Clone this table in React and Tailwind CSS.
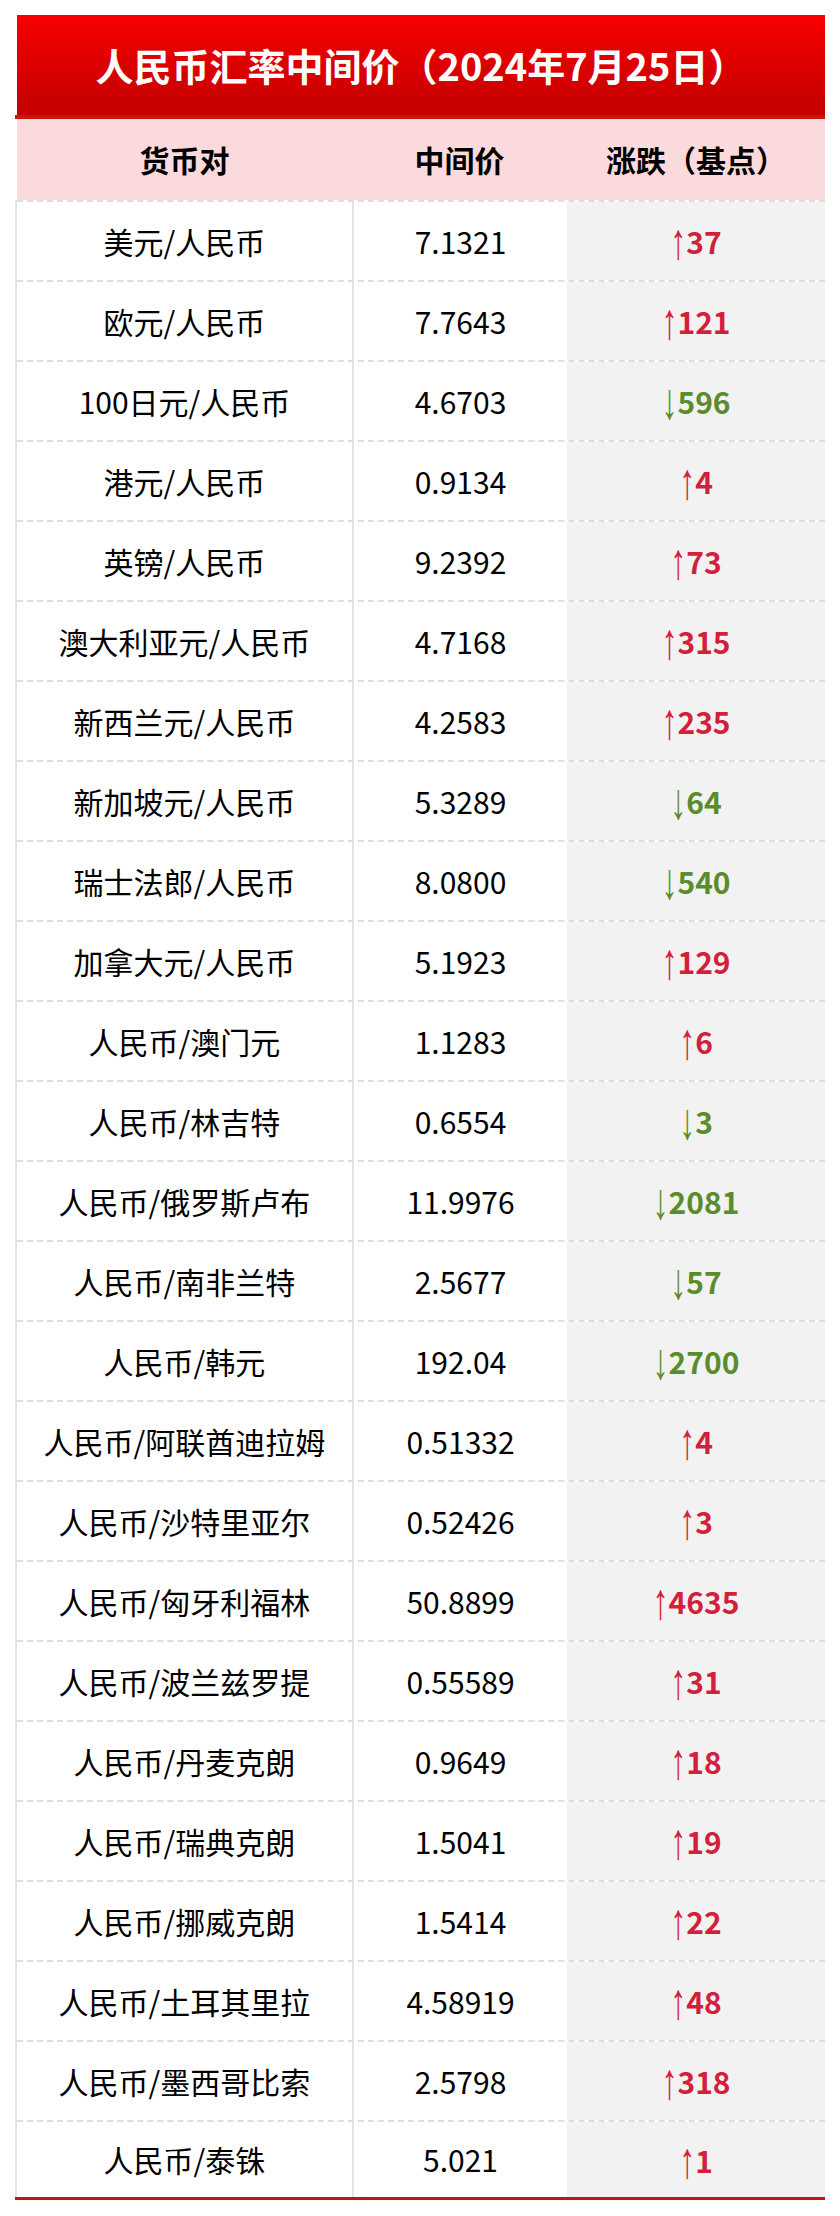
import React from 'react';

// 人民币汇率中间价 (2024-07-25)
const RATES = [
    ['美元/人民币', '7.1321', 1, '37'],
    ['欧元/人民币', '7.7643', 1, '121'],
    ['100日元/人民币', '4.6703', -1, '596'],
    ['港元/人民币', '0.9134', 1, '4'],
    ['英镑/人民币', '9.2392', 1, '73'],
    ['澳大利亚元/人民币', '4.7168', 1, '315'],
    ['新西兰元/人民币', '4.2583', 1, '235'],
    ['新加坡元/人民币', '5.3289', -1, '64'],
    ['瑞士法郎/人民币', '8.0800', -1, '540'],
    ['加拿大元/人民币', '5.1923', 1, '129'],
    ['人民币/澳门元', '1.1283', 1, '6'],
    ['人民币/林吉特', '0.6554', -1, '3'],
    ['人民币/俄罗斯卢布', '11.9976', -1, '2081'],
    ['人民币/南非兰特', '2.5677', -1, '57'],
    ['人民币/韩元', '192.04', -1, '2700'],
    ['人民币/阿联酋迪拉姆', '0.51332', 1, '4'],
    ['人民币/沙特里亚尔', '0.52426', 1, '3'],
    ['人民币/匈牙利福林', '50.8899', 1, '4635'],
    ['人民币/波兰兹罗提', '0.55589', 1, '31'],
    ['人民币/丹麦克朗', '0.9649', 1, '18'],
    ['人民币/瑞典克朗', '1.5041', 1, '19'],
    ['人民币/挪威克朗', '1.5414', 1, '22'],
    ['人民币/土耳其里拉', '4.58919', 1, '48'],
    ['人民币/墨西哥比索', '2.5798', 1, '318'],
    ['人民币/泰铢', '5.021', 1, '1'],
];

const FONT = "font-['Noto_Sans_CJK_SC','Noto_Sans',sans-serif]";

const Change = ({ dir, value }) => {
    const color = dir > 0 ? 'text-[#d21f3c]' : 'text-[#5a8c2c]';
    return (
        <span className={`flex items-center ${color}`}>
            <span className="inline-block scale-y-[1.6] font-['Liberation_Sans','DejaVu_Sans',sans-serif] text-[32px] font-normal leading-none">
                {dir > 0 ? '↑' : '↓'}
            </span>
            <span className="text-[30px] font-bold leading-none">{value}</span>
        </span>
    );
};

const App = () => {
    return (
        <div className={`min-h-[2216px] w-[840px] bg-white px-[15px] pt-[15px] ${FONT}`}>
            {/* Title */}
            <div className="ml-[2px] flex h-[100px] items-center justify-center bg-gradient-to-b from-[#f80000] to-[#c20000]">
                <h1 className="text-[38px] font-bold text-white leading-none">人民币汇率中间价（2024年7月25日）</h1>
            </div>
            <div className="h-[4px] bg-[#c8180c]" />

            {/* Header */}
            <div className="ml-[2px] flex h-[81px] bg-[#fadadd] text-[30px] font-bold text-black">
                <div className="flex w-[335px] items-center justify-center">货币对</div>
                <div className="flex w-[215px] items-center justify-center">中间价</div>
                <div className="flex w-[258px] items-center justify-center">涨跌（基点）</div>
            </div>

            {/* Rows */}
            <div className="border-l-2 border-[#e3e3e3]">
                {RATES.map(([pair, mid, dir, bp], i) => (
                    <div
                        key={pair}
                        className={`flex border-t-2 border-dashed border-[#dedede] ${i === RATES.length - 1 ? 'h-[77px]' : 'h-[80px]'}`}
                    >
                        <div className="flex w-[335px] items-center justify-center text-[30px] text-black">{pair}</div>
                        <div className="flex w-[215px] items-center justify-center border-l-2 border-solid border-[#e3e3e3] text-[30px] text-black">{mid}</div>
                        <div className="flex w-[258px] items-center justify-center bg-[#f2f2f2]">
                            <Change dir={dir} value={bp} />
                        </div>
                    </div>
                ))}
            </div>
            <div className="h-[3px] bg-[#c8120a]" />
        </div>
    );
};

export default App;
